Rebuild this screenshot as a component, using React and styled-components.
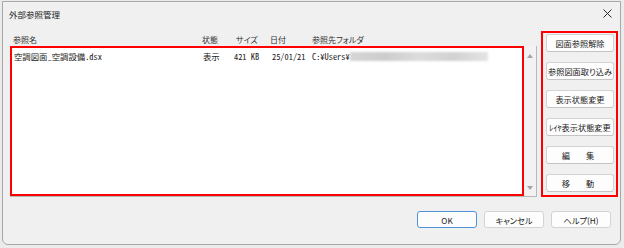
import React from 'react';
import styled, { createGlobalStyle } from 'styled-components';

const GlobalStyle = createGlobalStyle`
  html, body {
    margin: 0;
    padding: 0;
    background: #ebebeb;
  }
  body {
    width: 624px;
    height: 248px;
    overflow: hidden;
    font-family: "Noto Sans CJK JP", sans-serif;
  }
`;

const Window = styled.div`
  box-sizing: border-box;
  margin: 1px 0 0 2px;
  width: 619px;
  height: 244px;
  background: #f0f0f0;
  border: 1px solid #a8a8a8;
  border-radius: 0 0 6px 6px;
  display: flex;
  flex-direction: column;
`;

const TitleBar = styled.div`
  height: 23px;
  display: flex;
  align-items: center;
  justify-content: space-between;
  padding: 0 8px 0 6px;
`;

const Title = styled.span`
  font-size: 8.5px;
  color: #1a1a1a;
`;

const CloseIcon = () => (
  <svg width="9" height="9" viewBox="0 0 9 9">
    <path d="M0.5 0.5 L8.5 8.5 M8.5 0.5 L0.5 8.5" stroke="#2a2a2a" strokeWidth="1" />
  </svg>
);

const Body = styled.div`
  display: flex;
  gap: 4px;
  margin-top: 6px;
  padding-left: 7px;
`;

const LeftColumn = styled.div`
  width: 527px;
  display: flex;
  flex-direction: column;
`;

const HeaderRow = styled.div`
  height: 15px;
  display: grid;
  grid-template-columns: 189px 34px 34px 42px 1fr;
  padding: 3px 0 0 3px;
  box-sizing: border-box;
  font-size: 8px;
  line-height: 12px;
  color: #333;
  font-feature-settings: "palt";
`;

const ListView = styled.div`
  height: 150px;
  display: flex;
  border-right: 1px solid #b8b8b8;
  border-bottom: 1px solid #b8b8b8;
`;

const ListArea = styled.div`
  flex: 1;
  background: #fff;
  border: 2px solid #ff0000;
`;

const Row = styled.div`
  display: grid;
  grid-template-columns: 189px 31px 38px 40px 1fr;
  padding-left: 2px;
  margin-top: 2px;
  height: 12px;
  align-items: center;
  font-family: "Noto Sans Mono CJK JP", "Noto Sans CJK JP", monospace;
  font-size: 8.4px;
  color: #222;
  white-space: nowrap;
`;

const PathCell = styled.span`
  display: flex;
  align-items: center;
`;

const Blurred = styled.span`
  display: inline-block;
  width: 138px;
  height: 9px;
  background: linear-gradient(90deg, #d6d6d6, #cdcdcd 25%, #dcdcdc 50%, #d2d2d2 75%, #e4e4e4);
  filter: blur(0.8px);
`;

const ScrollBar = styled.div`
  width: 12px;
  background: #f2f2f2;
  display: flex;
  flex-direction: column;
  align-items: center;
  justify-content: space-between;
  padding: 8px 0 6px;
  box-sizing: border-box;
`;

const Arrow = styled.span`
  width: 0;
  height: 0;
  border-left: 3px solid transparent;
  border-right: 3px solid transparent;
  ${({ $down }) => ($down ? 'border-top: 4px solid #a4a4a4;' : 'border-bottom: 4px solid #a4a4a4;')}
`;

const SidePanel = styled.div`
  box-sizing: border-box;
  width: 77px;
  height: 166px;
  border: 2px solid #ff0000;
  padding: 1px 2px 0 3px;
  display: flex;
  flex-direction: column;
  gap: 10px;
`;

const SideButton = styled.button`
  box-sizing: border-box;
  height: 18px;
  width: 100%;
  padding: 0;
  background: #fdfdfd;
  border: 1px solid #d3d3d3;
  border-bottom-color: #c4c4c4;
  border-radius: 3px;
  font-family: "Noto Sans CJK JP", sans-serif;
  font-size: 8.2px;
  color: #1b1b1b;
  font-feature-settings: "palt";
  letter-spacing: ${({ $spaced }) => ($spaced ? '4px' : '0')};
  white-space: nowrap;
  overflow: hidden;
`;

const Footer = styled.div`
  display: flex;
  justify-content: flex-end;
  gap: 7px;
  margin-top: 14px;
  padding-right: 9px;
`;

const FooterButton = styled.button`
  box-sizing: border-box;
  width: 60px;
  height: 17px;
  padding: 0;
  background: #fdfdfd;
  border: 1px solid ${({ $primary }) => ($primary ? '#4f93d8' : '#d3d3d3')};
  border-radius: 3px;
  font-family: "Noto Sans CJK JP", sans-serif;
  font-size: 8.2px;
  color: #1b1b1b;
  font-feature-settings: "palt";
`;

const columns = ['参照名', '状態', 'サイズ', '日付', '参照先フォルダ'];

const sideActions = [
  { label: '図面参照解除' },
  { label: '参照図面取り込み' },
  { label: '表示状態変更' },
  { label: 'ﾚｲﾔ表示状態変更' },
  { label: '編　集', spaced: true },
  { label: '移　動', spaced: true },
];

const App = () => (
  <>
    <GlobalStyle />
    <Window>
      <TitleBar>
        <Title>外部参照管理</Title>
        <CloseIcon />
      </TitleBar>
      <Body>
        <LeftColumn>
          <HeaderRow>
            {columns.map((c) => <span key={c}>{c}</span>)}
          </HeaderRow>
          <ListView>
            <ListArea>
              <Row>
                <span>空調図面_空調設備.dsx</span>
                <span>表示</span>
                <span>421 KB</span>
                <span>25/01/21</span>
                <PathCell>
                  C:¥Users¥
                  <Blurred />
                </PathCell>
              </Row>
            </ListArea>
            <ScrollBar>
              <Arrow />
              <Arrow $down />
            </ScrollBar>
          </ListView>
        </LeftColumn>
        <SidePanel>
          {sideActions.map((a) => (
            <SideButton key={a.label} $spaced={a.spaced}>{a.label}</SideButton>
          ))}
        </SidePanel>
      </Body>
      <Footer>
        <FooterButton $primary>OK</FooterButton>
        <FooterButton>キャンセル</FooterButton>
        <FooterButton>ヘルプ(H)</FooterButton>
      </Footer>
    </Window>
  </>
);

export default App;
